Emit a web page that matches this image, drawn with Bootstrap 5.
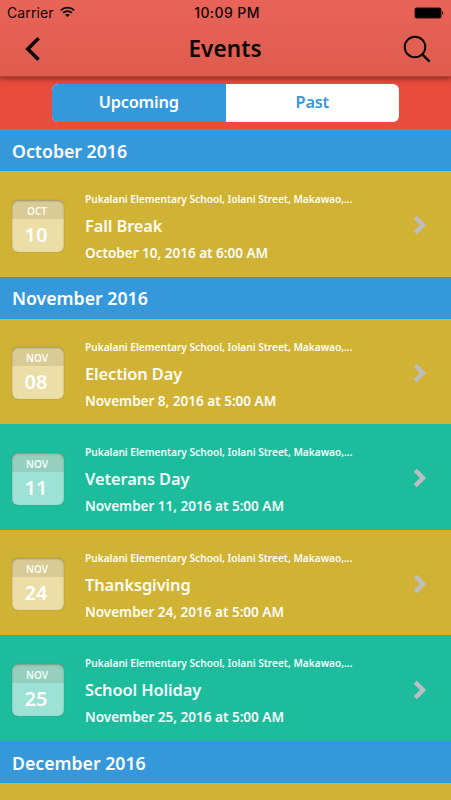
<!DOCTYPE html>
<html lang="en">
<head>
<meta charset="utf-8">
<meta name="viewport" content="width=device-width, initial-scale=1">
<title>Events</title>
<link href="https://cdn.jsdelivr.net/npm/bootstrap@5.3.0/dist/css/bootstrap.min.css" rel="stylesheet">
<style>
body{font-family:"Noto Sans","Open Sans",sans-serif;background:#d0b335;height:800px;overflow:hidden;line-height:1}
.app-head{height:77px;background:linear-gradient(#e96458,#df5b4e);box-shadow:0 1px 6px rgba(60,0,0,.65);border-bottom:1px solid #a8483f;position:relative;z-index:1;color:#0c0505}
.status{height:25px;font:14px/25px Inter,sans-serif;padding:0 7px 0 7px}
.status .side{flex:1 1 0}
.status .carrier{letter-spacing:.1px}
.status .wifi{margin:-1px 0 0 6px}
.status .clock{font-weight:500;letter-spacing:.4px;padding-left:3px}
.title-row{height:48px;padding:0 20px 0 24px}
.title-row h1{font-size:22.5px;font-weight:600;letter-spacing:.1px;padding:0 0 1px 5px}
.tabs-zone{height:52px;background:#e84c3d;padding-top:7px}
.seg{width:347px;height:38px;border-radius:6px;background:#fff}
.seg .btn{font-size:16.3px;font-weight:600;letter-spacing:-.2px;line-height:1;border:0;border-radius:0;color:#3498db;padding:0 0 2px}
.seg .btn.on{background:#3498db;color:#fff}
.month{height:42px;background:#3498db;color:#fff;font-size:17.7px;font-weight:600;letter-spacing:0;padding:3px 12px 0;margin:0}
.event{height:105.6px;background:#d0b335;color:#fffdf4;padding:0 24px 0 12px}
.event.green{background:#1dbc9c;color:#f2fffb}
.cal{width:52px;height:52px;border-radius:6px;background:rgba(255,255,255,.57);box-shadow:inset 0 1px 2px rgba(70,60,30,.4),0 0 1px rgba(80,70,20,.5);overflow:hidden;margin-top:3.5px}
.cal .mon{height:19px;background:rgba(110,95,50,.14);font-size:10px;font-weight:600;line-height:23px;padding-right:2px}
.cal .num{font-size:20px;font-weight:600;line-height:32px;padding-right:4px;color:#fff}
.info{margin-left:21px;padding-top:21px}
.place{font-size:10.2px;font-weight:600;letter-spacing:-.03px;line-height:15px}
.name{font-size:16.4px;font-weight:600;letter-spacing:-.1px;line-height:24px;margin:7px 0 0}
.when{font-size:13.6px;font-weight:600;letter-spacing:-.04px;line-height:20px;margin-top:5px}
.chev{margin-top:3px}
</style>
</head>
<body>
<header class="app-head">
  <div class="status d-flex align-items-center">
    <div class="side d-flex align-items-center"><span class="carrier">Carrier</span>
      <svg class="wifi" width="15" height="12" viewBox="0 0 15 12" fill="none" stroke="currentColor" stroke-width="1.7"><path d="M.8 4.4a9.6 9.6 0 0 1 13.4 0M3.1 6.9a6.2 6.2 0 0 1 8.8 0"/><path d="M7.5 11 5.2 8.8a3.3 3.3 0 0 1 4.6 0z" fill="currentColor" stroke="none"/></svg>
    </div>
    <span class="clock">10:09 PM</span>
    <div class="side d-flex justify-content-end">
      <svg width="30" height="12" viewBox="0 0 30 12"><rect x=".6" y=".6" width="26.8" height="10.8" rx="2" fill="#35100d"/><rect x="1.6" y="1.6" width="24.8" height="8.8" rx="1" fill="#000"/><path d="M28 4c1.6.5 1.6 3.5 0 4z" fill="#35100d"/></svg>
    </div>
  </div>
  <div class="title-row d-flex justify-content-between align-items-center">
    <svg width="18" height="26" viewBox="0 0 18 26" fill="none" stroke="currentColor" stroke-width="3.6"><path d="M14.6 2.2 3.8 13l10.8 10.8"/></svg>
    <h1 class="mb-0">Events</h1>
    <svg width="28" height="28" viewBox="0 0 28 28" fill="none" stroke="currentColor" stroke-width="2"><circle cx="12" cy="12" r="10.3"/><path d="m19.3 19.3 7.3 7.4" stroke-width="2.5"/></svg>
  </div>
</header>
<nav class="tabs-zone">
  <div class="seg d-flex mx-auto overflow-hidden">
    <button class="btn on w-50" type="button">Upcoming</button>
    <button class="btn w-50" type="button">Past</button>
  </div>
</nav>
<main id="list"></main>
<script>
const months=[
 ['October 2016',[['OCT','10','Fall Break','October 10, 2016 at 6:00 AM','']]],
 ['November 2016',[['NOV','08','Election Day','November 8, 2016 at 5:00 AM',''],
  ['NOV','11','Veterans Day','November 11, 2016 at 5:00 AM','green'],
  ['NOV','24','Thanksgiving','November 24, 2016 at 5:00 AM',''],
  ['NOV','25','School Holiday','November 25, 2016 at 5:00 AM','green']]],
 ['December 2016',[]]];
document.getElementById('list').innerHTML=months.map(([m,ev])=>`<h2 class="month d-flex align-items-center">${m}</h2>`+ev.map(([a,b,n,w,c])=>`
<article class="event d-flex align-items-center ${c}">
 <div class="cal flex-shrink-0 text-center"><div class="mon">${a}</div><div class="num">${b}</div></div>
 <div class="info align-self-start flex-grow-1 text-nowrap"><div class="place">Pukalani Elementary School, Iolani Street, Makawao,...</div><h3 class="name">${n}</h3><div class="when">${w}</div></div>
 <svg class="chev" width="14" height="20" viewBox="0 0 14 20" fill="none" stroke="#bdbdc2" stroke-width="4.4"><path d="m2.2 2.2 7.8 7.8-7.8 7.8"/></svg>
</article>`).join('')).join('');
</script>
<script src="https://cdn.jsdelivr.net/npm/bootstrap@5.3.0/dist/js/bootstrap.bundle.min.js"></script>
</body>
</html>
